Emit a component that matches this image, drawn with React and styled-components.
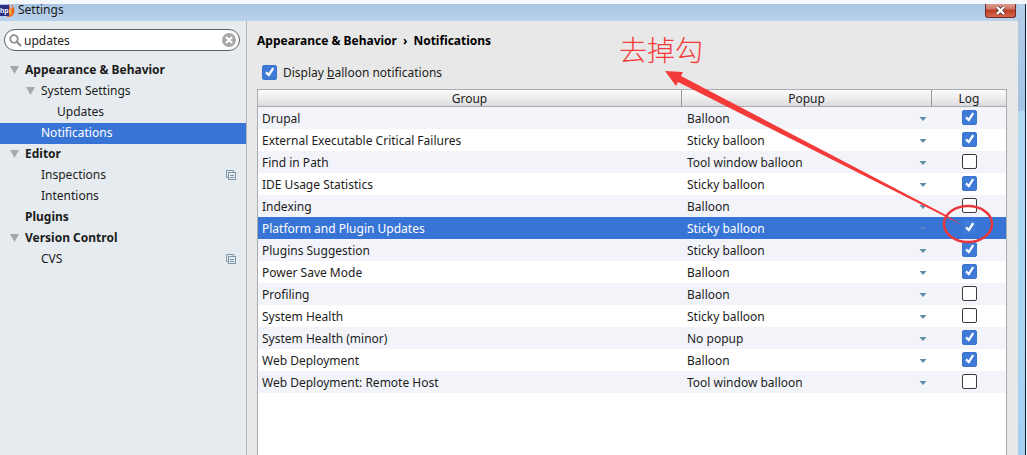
import React from "react";
import styled, { createGlobalStyle, css } from "styled-components";

const Global = createGlobalStyle`
  *, *::before, *::after { box-sizing: border-box; }
  html, body { margin: 0; }
  body, input, select, button, table {
    font-family: "Noto Sans", "Noto Sans CJK SC", sans-serif;
    font-size: 12px;
    line-height: 18px;
    color: #1c1c1c;
  }
`;

const Frame = styled.div`
  display: flex;
  min-height: 100vh;
  background: #f4f8fc;
`;

const Window = styled.div`
  flex: 1;
  min-width: 0;
  display: flex;
  flex-direction: column;
  padding-top: 4px;
`;

const TitleBar = styled.header`
  display: flex;
  align-items: flex-start;
  height: 17px;
  padding-right: 2px;
  background: linear-gradient(#abc6e2, #bad2ec);
`;

const AppIcon = styled.svg`
  flex: none;
  width: 15px;
  height: 14px;
`;

const Title = styled.h1`
  flex: 1;
  margin: 0 0 0 3px;
  font-size: 12px;
  line-height: 12px;
  font-weight: 400;
`;

const CloseButton = styled.button`
  display: flex;
  align-items: center;
  justify-content: center;
  width: 31px;
  height: 14px;
  padding: 0;
  border: 1px solid #6d2a2a;
  border-top: 0;
  border-radius: 0 0 3px 3px;
  background: linear-gradient(#d99a8c 0, #cf7563 40%, #bd3a24 45%, #d4684c 100%);
`;

const Body = styled.div`
  flex: 1;
  display: flex;
`;

const RightEdge = styled.div`
  flex: none;
  width: 9px;
  margin-top: 4px;
  border-right: 1px solid #f4f8fc;
  background: linear-gradient(90deg, transparent 7px, #10202c 7px),
    linear-gradient(#b4cde8 0, #a3c4e4 107px, #b5dcf5 107px, #a4d0f0 100%);
`;

const Sidebar = styled.aside`
  flex: none;
  width: 247px;
  padding-top: 8px;
  border-right: 1px solid #b4b6b8;
  background: #e6ebef;
`;

const SearchBox = styled.label`
  display: flex;
  align-items: center;
  gap: 2px;
  height: 22px;
  margin: 0 6px 9px 4px;
  padding: 0 3px 0 4px;
  border: 1px solid #5e6266;
  border-radius: 11px;
  background: #fff;
`;

const SearchInput = styled.input`
  flex: 1;
  min-width: 0;
  padding: 2px 0 0;
  border: 0;
  outline: 0;
  background: transparent;
`;

const ClearButton = styled.button`
  display: flex;
  padding: 0;
  border: 0;
  background: none;
`;

const Tree = styled.ul`
  margin: 0;
  padding: 0;
  list-style: none;
`;

const TreeItem = styled.li`
  display: flex;
  align-items: center;
  height: 21px;
  padding: 0 10px 2px ${(p) => 9 + p.$level * 16}px;
  font-weight: ${(p) => (p.$level === 0 ? 700 : 400)};
  ${(p) => p.$selected && css`
    color: #fff;
    background: #3874d6;
  `}
`;

const Toggle = styled.span`
  display: flex;
  width: 16px;
`;

const TreeLabel = styled.span`
  flex: 1;
`;

const Main = styled.main`
  position: relative;
  flex: 1;
  min-width: 0;
  display: flex;
  flex-direction: column;
  padding: 11px 11px 0 10px;
  background: #e8e8e8;
`;

const Breadcrumb = styled.h2`
  display: flex;
  gap: 6px;
  margin: 0 0 13px;
  font-size: 12px;
  line-height: 18px;
  font-weight: 700;
  color: #000;
`;

const OptionLabel = styled.label`
  display: flex;
  align-items: center;
  gap: 6px;
  height: 18px;
  margin: 0 0 8px 5px;
`;

const OptionText = styled.span`
  padding-top: 2px;
`;

const CheckWrap = styled.span`
  display: inline-grid;
  width: 15px;
  height: 15px;
  vertical-align: top;
  & > * { grid-area: 1 / 1; }
  & > svg { pointer-events: none; }
`;

const CheckInput = styled.input`
  appearance: none;
  width: 15px;
  height: 15px;
  margin: 0;
  border: 1px solid #3a3a3e;
  border-radius: 2px;
  background: #fff;
  &:checked {
    border-color: #3874d0;
    background: #3f7bd6;
  }
  & + svg { visibility: hidden; }
  &:checked + svg { visibility: visible; }
`;

const TablePane = styled.div`
  flex: 1;
  border: 1px solid #a9abae;
  border-bottom: 0;
  background: #fff;
`;

const Table = styled.table`
  width: 100%;
  table-layout: fixed;
  border-collapse: separate;
  border-spacing: 0;
`;

const HeadCell = styled.th`
  width: ${(p) => p.$width || "auto"};
  height: 17px;
  padding: 1px 0 0;
  line-height: 15px;
  font-weight: 400;
  border-bottom: 1px solid #a9abae;
  background: linear-gradient(#fcfcfc, #ededee 50%, #dcdcde);
  & + & { border-left: 1px solid #96989c; }
`;

const Row = styled.tr`
  color: #1c1c1c;
  background: ${(p) => (p.$striped ? "#f2f4fa" : "#fff")};
  ${(p) => p.$selected && css`
    color: #fff;
    background: #3874d6;
  `}
`;

const Cell = styled.td`
  height: 22px;
  padding: 2px 4px 0;
`;

const CheckCell = styled(Cell)`
  padding: 2px 3px 0 5px;
  text-align: center;
`;

const PopupField = styled.label`
  display: flex;
  align-items: center;
`;

const PopupSelect = styled.select`
  appearance: none;
  flex: 1;
  min-width: 0;
  height: 18px;
  padding: 0 0 0 2px;
  border: 0;
  outline: 0;
  color: inherit;
  background: transparent;
`;

const Annotation = styled.div`
  position: absolute;
  top: 8px;
  right: 25px;
  width: 374px;
  pointer-events: none;
`;

const Note = styled.p`
  position: absolute;
  top: 0;
  left: 0;
  margin: 0;
  font-family: "Noto Sans CJK SC", sans-serif;
  font-size: 28px;
  line-height: 40px;
  font-weight: 300;
  white-space: nowrap;
  color: #f53a3a;
`;

const Arrow = styled.svg`
  display: block;
`;

const treeItems = [
  { label: "Appearance & Behavior", level: 0, open: true },
  { label: "System Settings", level: 1, open: true },
  { label: "Updates", level: 2 },
  { label: "Notifications", level: 1, selected: true },
  { label: "Editor", level: 0, open: true },
  { label: "Inspections", level: 1, copy: true },
  { label: "Intentions", level: 1 },
  { label: "Plugins", level: 0 },
  { label: "Version Control", level: 0, open: true },
  { label: "CVS", level: 1, copy: true },
];

const popupKinds = ["Balloon", "Sticky balloon", "Tool window balloon", "No popup"];

const groups = [
  ["Drupal", "Balloon", true],
  ["External Executable Critical Failures", "Sticky balloon", true],
  ["Find in Path", "Tool window balloon", false],
  ["IDE Usage Statistics", "Sticky balloon", true],
  ["Indexing", "Balloon", false],
  ["Platform and Plugin Updates", "Sticky balloon", true],
  ["Plugins Suggestion", "Sticky balloon", true],
  ["Power Save Mode", "Balloon", true],
  ["Profiling", "Balloon", false],
  ["System Health", "Sticky balloon", false],
  ["System Health (minor)", "No popup", true],
  ["Web Deployment", "Balloon", true],
  ["Web Deployment: Remote Host", "Tool window balloon", false],
];
const selectedGroup = "Platform and Plugin Updates";

function CheckBox(props) {
  return (
    <CheckWrap>
      <CheckInput type="checkbox" {...props} />
      <svg width="15" height="15" viewBox="0 0 15 15" aria-hidden="true">
        <path d="M4 7.4 L6.8 10 L11.2 3.2" fill="none" stroke="#fff" strokeWidth="2.3" />
      </svg>
    </CheckWrap>
  );
}

function PhpStormIcon() {
  return (
    <AppIcon viewBox="0 0 15 14" aria-hidden="true">
      <path d="M8 0 C11 2 9 4 12 5 C13 3 12 1 11 0 C14 2 15 6 14 9 C13 12 11 13 7 13 Z" fill="#e8641c" />
      <path d="M9.5 4 C12.5 6 12 9 9.5 12 Z" fill="#fbc04a" />
      <rect x="0" y="1" width="9" height="11" fill="#2b2f86" />
      <text x="0" y="9" fill="#fff" fontFamily="Liberation Sans, sans-serif" fontSize="7" fontWeight="700">hp</text>
    </AppIcon>
  );
}

function CopyIcon() {
  return (
    <svg width="10" height="10" viewBox="0 0 10 10" aria-hidden="true">
      <g fill="none" stroke="#7d95aa" strokeWidth="1">
        <path d="M2.5 7.5 H0.5 V0.5 H7.5 V2.5" />
        <rect x="2.5" y="2.5" width="7" height="7" />
        <path d="M4 5.5 H8 M4 7.5 H8" />
      </g>
    </svg>
  );
}

export default function App() {
  return (
    <>
      <Global />
      <Frame>
        <Window>
          <TitleBar>
            <PhpStormIcon />
            <Title>Settings</Title>
            <CloseButton aria-label="Close">
              <svg width="11" height="9" viewBox="0 0 11 9" aria-hidden="true">
                <path d="M2 1 L9 8 M9 1 L2 8" stroke="#5a3a3c" strokeWidth="4" />
                <path d="M2 1 L9 8 M9 1 L2 8" stroke="#fff" strokeWidth="2.4" />
              </svg>
            </CloseButton>
          </TitleBar>
          <Body>
            <Sidebar>
              <SearchBox>
                <svg width="13" height="13" viewBox="0 0 13 13" aria-hidden="true">
                  <circle cx="5" cy="5" r="3.8" fill="none" stroke="#8e8e8e" strokeWidth="1.8" />
                  <path d="M7.8 7.8 L12 12" stroke="#8e8e8e" strokeWidth="2.2" />
                </svg>
                <SearchInput type="text" aria-label="Search settings" defaultValue="updates" />
                <ClearButton aria-label="Clear search">
                  <svg width="14" height="14" viewBox="0 0 14 14" aria-hidden="true">
                    <circle cx="7" cy="7" r="7" fill="#a9a9a9" />
                    <path d="M4 4 L10 10 M10 4 L4 10" stroke="#fff" strokeWidth="2" />
                  </svg>
                </ClearButton>
              </SearchBox>
              <Tree>
                {treeItems.map((t) => (
                  <TreeItem key={t.label} $level={t.level} $selected={t.selected}>
                    <Toggle>
                      {t.open && (
                        <svg width="10" height="8" viewBox="0 0 10 8" aria-hidden="true">
                          <path d="M1 0 H10 L5.5 8 Z" fill="#a6a8aa" />
                        </svg>
                      )}
                    </Toggle>
                    <TreeLabel>{t.label}</TreeLabel>
                    {t.copy && <CopyIcon />}
                  </TreeItem>
                ))}
              </Tree>
            </Sidebar>
            <Main>
              <Breadcrumb>
                <span>Appearance &amp; Behavior</span>
                <span>›</span>
                <span>Notifications</span>
              </Breadcrumb>
              <OptionLabel>
                <CheckBox defaultChecked />
                <OptionText>Display <u>b</u>alloon notifications</OptionText>
              </OptionLabel>
              <TablePane>
                <Table>
                  <thead>
                    <tr>
                      <HeadCell>Group</HeadCell>
                      <HeadCell $width="250px">Popup</HeadCell>
                      <HeadCell $width="75px">Log</HeadCell>
                    </tr>
                  </thead>
                  <tbody>
                    {groups.map(([name, popup, log], i) => {
                      const selected = name === selectedGroup;
                      return (
                        <Row key={name} $striped={i % 2 === 0} $selected={selected}>
                          <Cell>{name}</Cell>
                          <Cell>
                            <PopupField>
                              <PopupSelect aria-label={name + " popup"} defaultValue={popup}>
                                {popupKinds.map((k) => <option key={k}>{k}</option>)}
                              </PopupSelect>
                              <svg width="8" height="4" viewBox="0 0 8 4" aria-hidden="true">
                                <path d="M0.5 0 H7.5 L4 4 Z" fill={selected ? "#5080c8" : "#5f8ea8"} />
                              </svg>
                            </PopupField>
                          </Cell>
                          <CheckCell>
                            <CheckBox aria-label={name + " log"} defaultChecked={log} />
                          </CheckCell>
                        </Row>
                      );
                    })}
                  </tbody>
                </Table>
              </TablePane>
              <Annotation>
                <Note>去掉勾</Note>
                <Arrow width="374" height="218" viewBox="619 29 374 218" aria-hidden="true">
                  <path d="M665 71 L683 72 L681 76 L946 215 L962 225 L944 216 L678 82 L676 86 Z" fill="#f53a3a" />
                  <ellipse cx="968" cy="224" rx="24" ry="18" fill="none" stroke="#e8383c" strokeWidth="2.5" />
                </Arrow>
              </Annotation>
            </Main>
          </Body>
        </Window>
        <RightEdge />
      </Frame>
    </>
  );
}
